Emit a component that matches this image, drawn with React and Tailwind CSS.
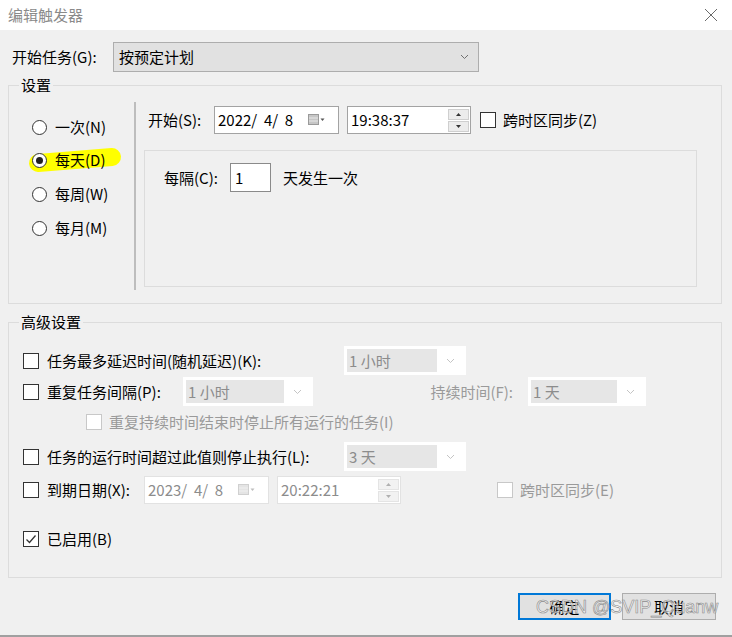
import React from "react";

const Chevron = ({ color = "#8a8a8a" }) => (
  <svg width="9" height="6" viewBox="0 0 9 6">
    <path d="M1 1l3.5 3.5L8 1" fill="none" stroke={color} strokeWidth="1" />
  </svg>
);

const CalendarIcon = ({ disabled }) => (
  <svg width="18" height="12" viewBox="0 0 18 12">
    <rect x="0.5" y="0.5" width="10" height="10" fill={disabled ? "#e4e4e4" : "#c6c6c6"} stroke={disabled ? "#d0d0d0" : "#9a9a9a"} />
    <path d="M1 4h9M1 7h9" stroke={disabled ? "#f0f0f0" : "#e8e8e8"} />
    <path d="M12.5 4.5h4l-2 2.5z" fill={disabled ? "#bdbdbd" : "#555"} />
  </svg>
);

const Spinner = ({ disabled }) => (
  <div className="flex flex-col gap-[1px] mr-[1px]">
    {["M2 5h5L4.5 2z", "M2 2h5L4.5 5z"].map((d, i) => (
      <div
        key={i}
        className={`w-[21px] h-[11px] flex items-center justify-center border ${disabled ? "border-[#e4e4e4] bg-[#f2f2f2]" : "border-[#cfcfcf] bg-[#ececec]"}`}
      >
        <svg width="9" height="7" viewBox="0 0 9 7">
          <path d={d} fill={disabled ? "#b0b0b0" : "#333"} />
        </svg>
      </div>
    ))}
  </div>
);

const Check = ({ checked, disabled }) => (
  <div
    className={`w-[16px] h-[16px] flex items-center justify-center shrink-0 border ${disabled ? "border-[#c8c8c8] bg-white" : "border-[#333] bg-white"}`}
  >
    {checked && (
      <svg width="12" height="12" viewBox="0 0 12 12">
        <path d="M1.5 6.5l3 3 6-7" fill="none" stroke="#333" strokeWidth="1.3" />
      </svg>
    )}
  </div>
);

const Radio = ({ checked }) => (
  <div className="w-[15px] h-[15px] rounded-full border border-[#333] bg-white flex items-center justify-center relative z-10">
    {checked && <div className="w-[7px] h-[7px] rounded-full bg-[#222]" />}
  </div>
);

const DisabledCombo = ({ value, width }) => (
  <div className={`${width} h-[29px] bg-white p-[3px] flex shrink-0`}>
    <div className="flex-1 bg-[#e6e6e6] flex items-center px-[2px] text-[#8c8c8c]">{value}</div>
    <div className="w-[26px] flex items-center justify-center">
      <Chevron color="#c4c4c4" />
    </div>
  </div>
);

const DateBox = ({ value, disabled }) => (
  <div
    className={`w-[125px] h-[28px] bg-white border flex items-center justify-between pl-[3px] pr-[12px] shrink-0 ${disabled ? "border-[#e2e2e2] text-[#8c8c8c]" : "border-[#a3a3a3]"}`}
  >
    <span className="whitespace-pre">{value}</span>
    <CalendarIcon disabled={disabled} />
  </div>
);

const TimeBox = ({ value, disabled }) => (
  <div
    className={`w-[124px] h-[28px] ml-[8px] bg-white border flex items-center justify-between pl-[3px] shrink-0 ${disabled ? "border-[#e2e2e2] text-[#8c8c8c]" : "border-[#a3a3a3]"}`}
  >
    <span>{value}</span>
    <Spinner disabled={disabled} />
  </div>
);

export default function App() {
  const radios = [
    { label: "一次(N)", mt: "mt-[22px]" },
    { label: "每天(D)", mt: "mt-[13px]", checked: true },
    { label: "每周(W)", mt: "mt-[14px]" },
    { label: "每月(M)", mt: "mt-[14px]" },
  ];

  return (
    <div className="w-[732px] h-[637px] bg-[#f0f0f0] relative flex flex-col overflow-hidden text-[15px] leading-[20px] text-black font-['Noto_Sans_CJK_SC','Noto_Sans',sans-serif]">
      {/* title bar */}
      <div className="h-[30px] bg-white flex items-center justify-between pl-[8px] pr-[14px] shrink-0">
        <span className="text-[#8a8a8a]">编辑触发器</span>
        <svg width="14" height="14" viewBox="0 0 14 14">
          <path d="M1 1l12 12M13 1L1 13" stroke="#6a6a6a" strokeWidth="1" />
        </svg>
      </div>

      {/* start task */}
      <div className="mt-[12px] h-[30px] flex items-center pl-[12px]">
        <span className="w-[101px]">开始任务(G):</span>
        <div className="w-[366px] h-[30px] bg-[#e1e1e1] border border-[#adadad] flex items-center justify-between pl-[5px] pr-[9px]">
          <span>按预定计划</span>
          <Chevron color="#707070" />
        </div>
      </div>

      {/* settings group */}
      <fieldset className="mt-[3px] ml-[8px] w-[714px] h-[229px] border border-[#dcdcdc] p-0 m-0 min-w-0">
        <legend className="ml-[10px] px-[2px] leading-[20px]">设置</legend>
        <div className="flex h-full">
          <div className="w-[125px] flex flex-col pl-[23px]">
            {radios.map((r) => (
              <div key={r.label} className={`${r.mt} h-[20px] flex items-center gap-[8px]`}>
                <Radio checked={r.checked} />
                <span className="relative z-10">{r.label}</span>
              </div>
            ))}
          </div>
          <div className="w-[2px] mt-[7px] h-[188px] bg-[#bdbdbd]" />
          <div className="flex-1 flex flex-col">
            <div className="mt-[11px] flex items-center pl-[12px]">
              <span className="w-[66px]">开始(S):</span>
              <DateBox value="2022/  4/  8" />
              <TimeBox value="19:38:37" />
              <div className="ml-[9px]">
                <Check />
              </div>
              <span className="ml-[7px]">跨时区同步(Z)</span>
            </div>
            <div className="mt-[16px] ml-[8px] w-[553px] h-[137px] border border-[#dcdcdc]">
              <div className="mt-[12px] flex items-center pl-[19px]">
                <span className="w-[66px]">每隔(C):</span>
                <div className="w-[41px] h-[29px] bg-white border border-[#8a8a8a] flex items-center pl-[4px]">1</div>
                <span className="ml-[12px]">天发生一次</span>
              </div>
            </div>
          </div>
        </div>
      </fieldset>

      {/* advanced group */}
      <fieldset className="mt-[8px] ml-[8px] w-[714px] h-[266px] border border-[#dcdcdc] p-0 m-0 min-w-0">
        <legend className="ml-[10px] px-[2px] leading-[20px]">高级设置</legend>
        <div className="flex flex-col pl-[14px]">
          <div className="mt-[14px] h-[29px] flex items-center">
            <Check />
            <span className="ml-[8px] w-[297px]">任务最多延迟时间(随机延迟)(K):</span>
            <DisabledCombo value="1 小时" width="w-[122px]" />
          </div>
          <div className="mt-[2px] h-[29px] flex items-center">
            <Check />
            <span className="ml-[8px] w-[136px]">重复任务间隔(P):</span>
            <DisabledCombo value="1 小时" width="w-[130px]" />
            <span className="w-[215px] text-right pr-[15px] text-[#9a9a9a]">持续时间(F):</span>
            <DisabledCombo value="1 天" width="w-[118px]" />
          </div>
          <div className="mt-[6px] h-[20px] flex items-center pl-[63px]">
            <Check disabled />
            <span className="ml-[7px] text-[#9a9a9a]">重复持续时间结束时停止所有运行的任务(I)</span>
          </div>
          <div className="mt-[10px] h-[29px] flex items-center">
            <Check />
            <span className="ml-[8px] w-[297px]">任务的运行时间超过此值则停止执行(L):</span>
            <DisabledCombo value="3 天" width="w-[122px]" />
          </div>
          <div className="mt-[5px] h-[28px] flex items-center">
            <Check />
            <span className="ml-[8px] w-[97px]">到期日期(X):</span>
            <DateBox value="2023/  4/  8" disabled />
            <TimeBox value="20:22:21" disabled />
            <div className="ml-[96px]">
              <Check disabled />
            </div>
            <span className="ml-[7px] text-[#9a9a9a]">跨时区同步(E)</span>
          </div>
          <div className="mt-[25px] h-[20px] flex items-center">
            <Check checked />
            <span className="ml-[8px]">已启用(B)</span>
          </div>
        </div>
      </fieldset>

      {/* buttons */}
      <div className="mt-[15px] flex justify-end gap-[11px] pr-[16px]">
        <button className="w-[93px] h-[27px] bg-[#e1e1e1] border-2 border-[#0078d7] flex items-center justify-center">确定</button>
        <button className="w-[94px] h-[27px] bg-[#e1e1e1] border border-[#adadad] flex items-center justify-center">取消</button>
      </div>

      <div className="mt-auto h-[2px] bg-[#a0a0a0]" />

      {/* highlight annotation */}
      <svg className="absolute left-0 top-0 pointer-events-none" width="140" height="190">
        <path d="M38 163 L112 157" stroke="#ffff00" strokeWidth="18" strokeLinecap="round" />
      </svg>

      {/* watermark */}
      <div className="absolute left-[536px] top-[596px] whitespace-nowrap text-[18px] leading-[22px] font-['Liberation_Sans',sans-serif] text-white/60 [-webkit-text-stroke:0.6px_#8a8a8a] pointer-events-none">
        CSDN @SVIP_Quanw
      </div>
    </div>
  );
}
